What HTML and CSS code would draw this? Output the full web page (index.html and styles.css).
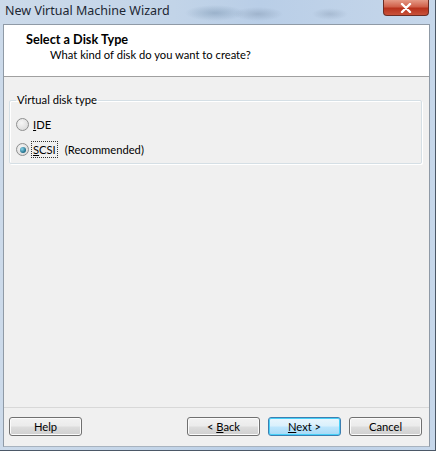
FILE: index.html
```html
<!DOCTYPE html>
<html>
<head>
<meta charset="utf-8">
<link rel="stylesheet" href="styles.css">
</head>
<body>
<div class="window">
  <div class="titlebar">
    <span class="title">New Virtual Machine Wizard</span>
    <span class="close"><svg width="14" height="10" viewBox="0 0 14 10"><path d="M3 1 L11 9 M11 1 L3 9" stroke="#fff" stroke-width="2.4" stroke-linecap="round"/></svg></span>
  </div>
  <div class="client">
    <div class="header">
      <div class="h-title">Select a Disk Type</div>
      <div class="h-sub">What kind of disk do you want to create?</div>
    </div>
    <div class="body">
      <fieldset class="group">
        <legend>Virtual disk type</legend>
        <label class="radio"><span class="dot"></span><span><u>I</u>DE</span></label>
        <label class="radio"><span class="dot on"></span><span class="focus"><u>S</u>CSI</span><span class="rec">(Recommended)</span></label>
      </fieldset>
    </div>
    <div class="footer">
      <button class="btn">Help</button>
      <div class="spacer"></div>
      <button class="btn">&lt; <u>B</u>ack</button>
      <button class="btn default"><u>N</u>ext &gt;</button>
      <button class="btn">Cancel</button>
    </div>
  </div>
</div>
</body>
</html>
```
FILE: styles.css
```css
html, body { margin: 0; padding: 0; }
body {
  width: 436px; height: 451px; overflow: hidden;
  font-family: "Lato", "Noto Sans", sans-serif;
  font-size: 11.2px; color: #000;
  background: #c6d6e8;
}
.window {
  width: 436px; height: 451px; box-sizing: border-box;
  background:
    radial-gradient(ellipse 30px 8px at 215px 13px, rgba(90,120,150,0.35), transparent),
    radial-gradient(ellipse 25px 7px at 258px 14px, rgba(100,120,145,0.3), transparent),
    radial-gradient(ellipse 18px 6px at 330px 14px, rgba(100,120,145,0.25), transparent),
    linear-gradient(90deg, #ccdaea 0%, #c2d4e8 40%, #b9cee7 60%, #c6d7ea 100%);
  padding: 0 5px 3px 3px;
  display: flex; flex-direction: column;
  border-right: 1px solid #4b5867;
  border-bottom: 1px solid #4b5867;
}
.titlebar {
  height: 24px; position: relative; display: flex; align-items: flex-start;
}
.title {
  font-family: "Noto Sans", sans-serif; font-size: 12.5px; color: #1d2733;
  padding: 2px 0 0 2px; line-height: 18px;
}
.close {
  position: absolute; right: 1px; top: 0; width: 46px; height: 16px;
  box-sizing: border-box; border: 1px solid #6c2d24; border-top: none;
  border-radius: 0 0 4px 4px;
  background: linear-gradient(#e59a86 0%, #d0604a 45%, #b8321c 55%, #c9523a 100%);
  display: flex; align-items: center; justify-content: center;
}
.client {
  flex: 1; background: #f0f0f0; display: flex; flex-direction: column;
  border: 1px solid #8f9aa6; border-bottom-color: #a8b3bf;
}
.header {
  background: #fff; height: 52px; box-sizing: border-box;
  border-bottom: 1px solid #a0a0a0; padding: 6px 0 0 22px;
}
.h-title { font-weight: bold; font-size: 12.7px; line-height: 16px; }
.h-sub { padding-left: 24px; line-height: 16px; margin-top: 0; }
.body { flex: 1; padding: 16px 7px 0 5px; }
.group {
  margin: 0; border: 1px solid #d5dfe5; border-radius: 2px;
  padding: 5px 8px 1px 6px;
  box-shadow: inset 1px 1px 0 #fff, 1px 1px 0 #fff;
}
.group legend { padding: 0 1px; margin-left: 0; line-height: 14px; color: #000; }
.radio { display: flex; align-items: center; height: 25px; gap: 3px; }
.dot {
  width: 13px; height: 13px; border-radius: 50%; box-sizing: border-box;
  border: 1px solid #8e8f8f; margin-right: 1px;
  background: radial-gradient(circle at 40% 35%, #f6f6f6, #d4d4d4);
  position: relative;
}
.dot.on::after {
  content: ""; position: absolute; left: 2.5px; top: 2.5px; width: 6px; height: 6px;
  border-radius: 50%; background: radial-gradient(circle at 35% 35%, #8ad5ec, #1c6b86 70%);
}
.focus { outline: 1px dotted #333; outline-offset: 1px; line-height: 13px; }
.rec { margin-left: 6px; }
.footer {
  height: 39px; box-sizing: border-box; border-top: 1px solid #d8d8d8;
  display: flex; align-items: flex-start; padding: 9px 7px 0 5px; gap: 8px;
}
.spacer { flex: 1; }
.btn {
  width: 73px; height: 19px; font-family: inherit; font-size: 11.2px; padding: 0;
  border: 1px solid #707070; border-radius: 3px; color: #000;
  background: linear-gradient(#f2f2f2 0%, #ebebeb 48%, #dddddd 52%, #cfcfcf 100%);
  box-shadow: inset 0 0 0 1px #fbfbfb;
  line-height: 16px;
}
.btn.default {
  border-color: #3c7fb1;
  background: linear-gradient(#eaf6fd 0%, #d9f0fc 48%, #bee6fd 52%, #a7d9f5 100%);
  box-shadow: inset 0 0 0 1px #48d0f8;
}
.btn u, .radio u { text-decoration: underline; }
```
